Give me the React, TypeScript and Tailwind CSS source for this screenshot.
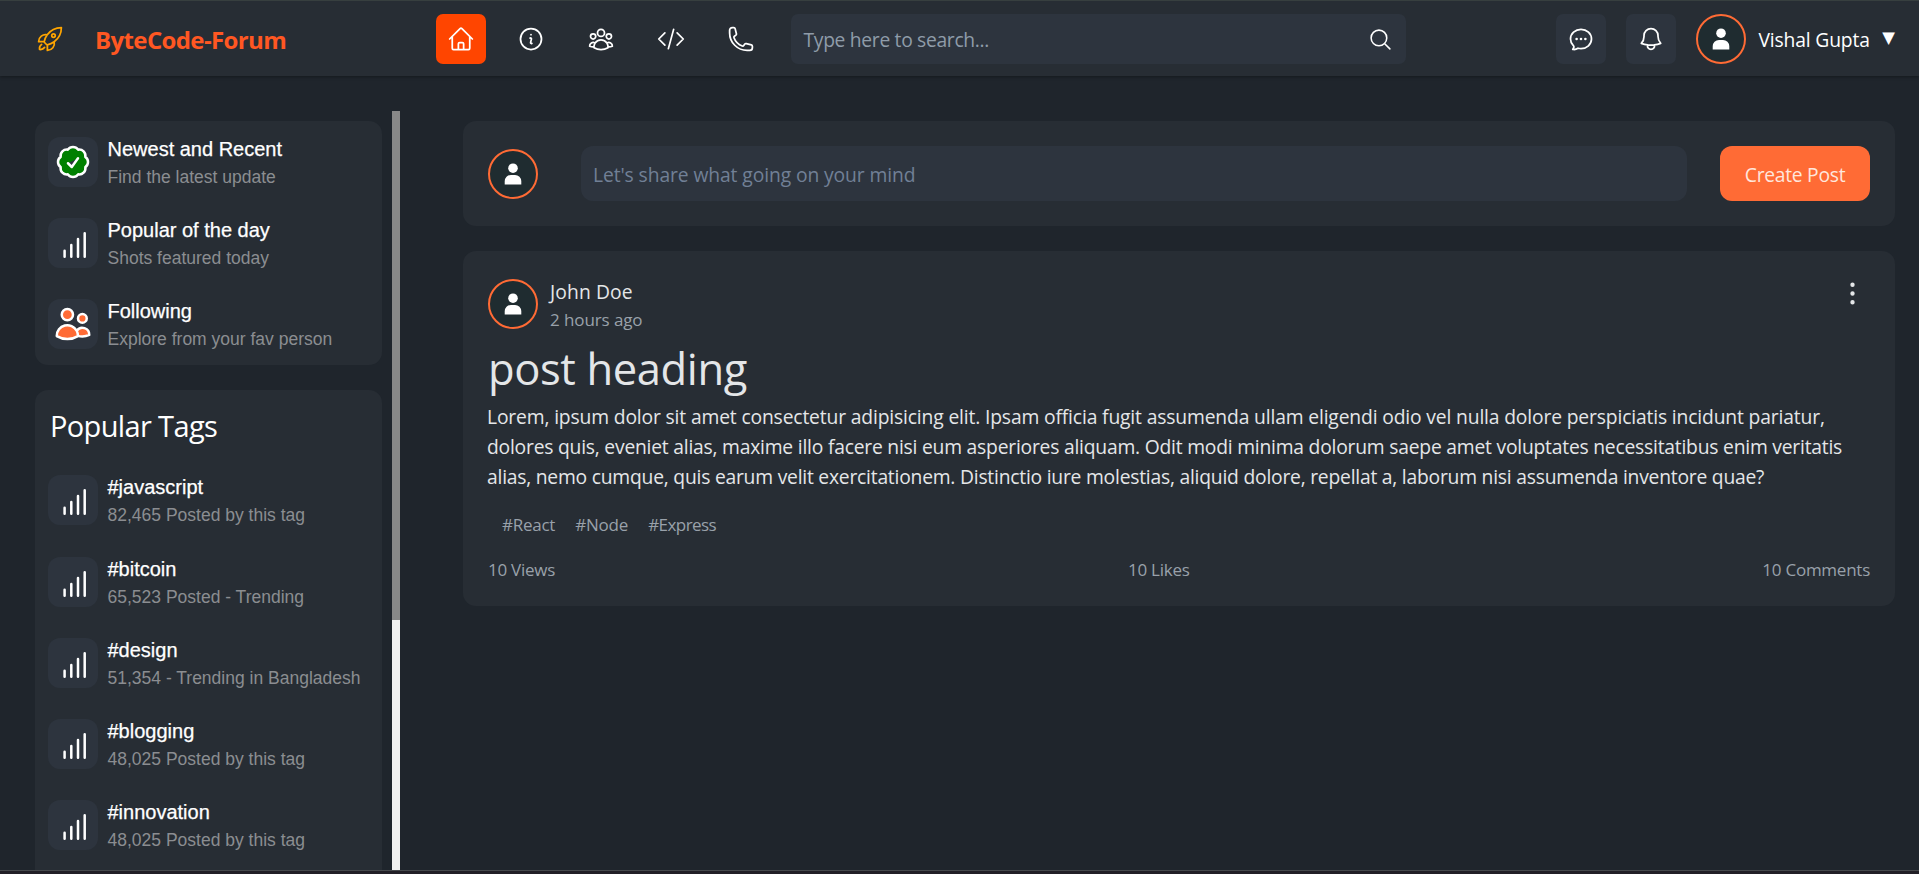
import type { ReactNode } from "react";
import {
  HiOutlineBell,
  HiOutlineChatBubbleOvalLeftEllipsis,
  HiOutlineCheckBadge,
  HiOutlineCodeBracket,
  HiOutlineEllipsisVertical,
  HiOutlineHome,
  HiOutlineInformationCircle,
  HiOutlineMagnifyingGlass,
  HiOutlinePhone,
  HiOutlineRocketLaunch,
  HiOutlineUserGroup,
  HiOutlineUsers,
} from "react-icons/hi2";

const navIcons = [HiOutlineInformationCircle, HiOutlineUserGroup, HiOutlineCodeBracket, HiOutlinePhone];

const tags = [
  { name: "#javascript", info: "82,465 Posted by this tag" },
  { name: "#bitcoin", info: "65,523 Posted - Trending" },
  { name: "#design", info: "51,354 - Trending in Bangladesh" },
  { name: "#blogging", info: "48,025 Posted by this tag" },
  { name: "#innovation", info: "48,025 Posted by this tag" },
];

function Avatar() {
  return (
    <div className="flex size-[50px] shrink-0 items-center justify-center rounded-full border-2 border-[#ff6b35] bg-[#1f2c30]">
      <svg width="18" height="22" viewBox="0 0 18 22" fill="white">
        <circle cx="9" cy="5.2" r="4.8" />
        <path d="M.7 21.4v-3.2a6.3 6.3 0 0 1 6.3-6.3h4a6.3 6.3 0 0 1 6.3 6.3v3.2z" />
      </svg>
    </div>
  );
}

function Bars() {
  return (
    <svg width="50" height="50" viewBox="0 0 50 50" fill="none" stroke="white" strokeWidth="2.5" strokeLinecap="round">
      <path d="M16.6 32.8v6M23.3 27v11.8M30 21v17.8M36.7 15.2v23.6" />
    </svg>
  );
}

function SideRow({ icon, title, text }: { icon: ReactNode; title: string; text: string }) {
  return (
    <div className="flex h-[55px] items-center gap-[9.5px]">
      <div className="flex size-[50px] shrink-0 items-center justify-center rounded-[12px] bg-[#2d343e] text-white">{icon}</div>
      <div className="whitespace-nowrap font-['Liberation_Sans',sans-serif]">
        <div className="text-[20px] leading-[30px] text-white [-webkit-text-stroke:0.25px_white]">{title}</div>
        <div className="pt-[1px] text-[17.5px] leading-[24px] text-[#8b8d91]">{text}</div>
      </div>
    </div>
  );
}

function Header() {
  return (
    <header className="flex h-[76px] shrink-0 items-start border-t border-[#373f3f] bg-[#272d34] pt-[13px] shadow-[0_1px_3px_rgba(0,0,0,0.35)]">
      <div className="ml-[36px] flex h-[50px] w-[400px] items-center">
        <HiOutlineRocketLaunch size={28} className="text-[#ffa500]" />
        <span className="ml-[31px] mt-[2px] text-[24px] font-bold leading-[30px] tracking-[-0.62px] text-[#ff5722]">ByteCode-Forum</span>
      </div>
      <nav className="flex gap-[20px] text-white">
        <a className="flex size-[50px] items-center justify-center rounded-[7px] bg-[#ff4500]">
          <HiOutlineHome size={28} />
        </a>
        {navIcons.map((Icon, i) => (
          <a key={i} className="flex size-[50px] items-center justify-center">
            <Icon size={28} />
          </a>
        ))}
      </nav>
      <div className="ml-[25px] flex h-[50px] w-[615px] items-center justify-between rounded-[7px] bg-[#2d343e] pl-[12.5px] pr-[13px]">
        <span className="pt-[2px] text-[19.3px] tracking-[-0.32px] text-[#8f9ca9]">Type here to search...</span>
        <HiOutlineMagnifyingGlass size={25} className="text-white" />
      </div>
      <div className="ml-[150px] flex items-center gap-[20px] text-white">
        <div className="flex size-[50px] items-center justify-center rounded-[7px] bg-[#2d343e]">
          <HiOutlineChatBubbleOvalLeftEllipsis size={28} />
        </div>
        <div className="flex size-[50px] items-center justify-center rounded-[7px] bg-[#2d343e]">
          <HiOutlineBell size={28} />
        </div>
        <div className="flex items-center">
          <Avatar />
          <span className="ml-[12.5px] whitespace-nowrap pt-[2px] text-[19.3px] tracking-[-0.16px]">Vishal Gupta</span>
          <span className="mb-[2px] ml-[12.5px] font-['DejaVu_Sans',sans-serif] text-[16.5px] leading-none">▼</span>
        </div>
      </div>
    </header>
  );
}

function Sidebar() {
  return (
    <>
      <aside className="w-[392px] shrink-0 overflow-hidden pl-[35px] pt-[45px]">
        <section className="flex h-[244px] w-[347px] flex-col gap-[26px] rounded-[13px] bg-[#272d34] px-[13px] pt-[13px]">
          <SideRow icon={<HiOutlineCheckBadge size={40} fill="green" />} title="Newest and Recent" text="Find the latest update" />
          <SideRow icon={<Bars />} title="Popular of the day" text="Shots featured today" />
          <SideRow icon={<HiOutlineUsers size={40} fill="#ff6b35" />} title="Following" text="Explore from your fav person" />
        </section>
        <section className="mt-[25px] flex h-[700px] w-[347px] flex-col gap-[26px] rounded-[13px] bg-[#272d34] px-[13px] pt-[16px] [&>*:nth-child(2)]:mb-px">
          <h2 className="pl-[2px] text-[29px] leading-[40px] tracking-[-0.64px] text-white">Popular Tags</h2>
          {tags.map((t) => (
            <SideRow key={t.name} icon={<Bars />} title={t.name} text={t.info} />
          ))}
        </section>
      </aside>
      <div className="mt-[35px] flex w-[8px] shrink-0 flex-col bg-[#f1f1f1]">
        <div className="h-[509px] bg-[#888888]" />
      </div>
    </>
  );
}

function Feed() {
  return (
    <main className="ml-[63px] w-[1432px] pt-[45px]">
      <section className="flex h-[105px] items-center rounded-[13px] bg-[#272d34] px-[25px]">
        <Avatar />
        <div className="ml-[43px] flex h-[55px] w-[1106px] items-center rounded-[12px] bg-[#2d343e] pl-[12px] pt-[3px] text-[19.3px] tracking-[-0.1px] text-[#718096]">
          Let's share what going on your mind
        </div>
        <button className="ml-[33px] h-[55px] w-[150px] rounded-[12px] bg-[#ff6b35] pt-[3px] text-[19.3px] tracking-[-0.28px] text-[#ffe6dc]">Create Post</button>
      </section>

      <article className="mt-[25px] h-[355px] rounded-[13px] bg-[#272d34] px-[25px] pt-[25px] text-[#e4e6e8]">
        <div className="flex h-[55px] items-center">
          <Avatar />
          <div className="ml-[12px] pt-[2px]">
            <div className="text-[19.3px] leading-[30px] tracking-[0.1px]">John Doe</div>
            <div className="text-[17px] leading-[25px] tracking-[-0.1px] text-[#99a1aa]">2 hours ago</div>
          </div>
          <HiOutlineEllipsisVertical size={35} className="mb-[21px] ml-auto mr-0" />
        </div>
        <h1 className="mt-[13px] text-[43.5px] leading-[50px] tracking-[-0.38px]">post heading</h1>
        <div className="mt-[8px] whitespace-nowrap text-[19.3px] leading-[30px]">
          <p className="-ml-px tracking-[-0.154px]">
            Lorem, ipsum dolor sit amet consectetur adipisicing elit. Ipsam officia fugit assumenda ullam eligendi odio vel nulla dolore perspiciatis incidunt pariatur,
          </p>
          <p className="-ml-px tracking-[-0.22px]">
            dolores quis, eveniet alias, maxime illo facere nisi eum asperiores aliquam. Odit modi minima dolorum saepe amet voluptates necessitatibus enim veritatis
          </p>
          <p className="-ml-px tracking-[-0.225px]">
            alias, nemo cumque, quis earum velit exercitationem. Distinctio iure molestias, aliquid dolore, repellat a, laborum nisi assumenda inventore quae?
          </p>
        </div>
        <div className="mt-[20px] flex gap-[20px] pl-[14px] text-[17px] leading-[25px] text-[#99a1aa]">
          <span className="tracking-[-0.25px]">#React</span>
          <span className="tracking-[-0.2px]">#Node</span>
          <span className="tracking-[-0.55px]">#Express</span>
        </div>
        <div className="mt-[20px] flex justify-between text-[17px] leading-[25px] tracking-[-0.25px] text-[#99a1aa]">
          <span>10 Views</span>
          <span>10 Likes</span>
          <span>10 Comments</span>
        </div>
      </article>
    </main>
  );
}

export default function App() {
  return (
    <div className="flex h-[874px] w-full flex-col overflow-hidden bg-[#1f252c] font-['Open_Sans','Noto_Sans',sans-serif]">
      <Header />
      <div className="flex h-[794px] shrink-0">
        <Sidebar />
        <Feed />
      </div>
      <div className="h-[4px] shrink-0 border-t border-[#46494c] bg-[#211f26]" />
    </div>
  );
}
